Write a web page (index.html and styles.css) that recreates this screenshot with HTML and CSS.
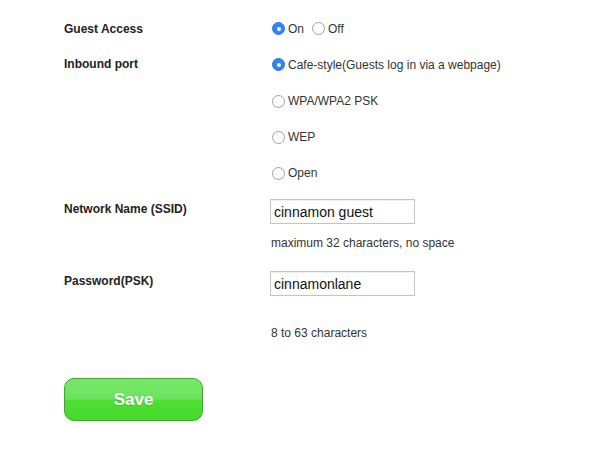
FILE: index.html
```html
<!DOCTYPE html>
<html>
<head>
<meta charset="utf-8">
<link rel="stylesheet" href="styles.css">
</head>
<body>
<form class="settings">
  <div class="row radio-row first">
    <div class="label">Guest Access</div>
    <div class="value inline">
      <label class="opt"><span class="radio checked"></span>On</label>
      <label class="opt"><span class="radio"></span>Off</label>
    </div>
  </div>
  <div class="row radio-row">
    <div class="label">Inbound port</div>
    <div class="value"><label class="opt"><span class="radio checked"></span>Cafe-style(Guests log in via a webpage)</label></div>
  </div>
  <div class="row radio-row sub-first">
    <div class="label"></div>
    <div class="value"><label class="opt"><span class="radio"></span>WPA/WPA2 PSK</label></div>
  </div>
  <div class="row radio-row">
    <div class="label"></div>
    <div class="value"><label class="opt"><span class="radio"></span>WEP</label></div>
  </div>
  <div class="row radio-row">
    <div class="label"></div>
    <div class="value"><label class="opt"><span class="radio"></span>Open</label></div>
  </div>
  <div class="row field-row ssid">
    <div class="label field-label">Network Name (SSID)</div>
    <div class="value">
      <input class="text" type="text" value="cinnamon guest">
      <div class="hint">maximum 32 characters, no space</div>
    </div>
  </div>
  <div class="row field-row psk">
    <div class="label field-label">Password(PSK)</div>
    <div class="value">
      <input class="text" type="text" value="cinnamonlane">
      <div class="hint hint-far">8 to 63 characters</div>
    </div>
  </div>
  <div class="actions">
    <button type="button" class="save">Save</button>
  </div>
</form>
</body>
</html>
```
FILE: styles.css
```css
html, body {
  margin: 0;
  padding: 0;
  background: #ffffff;
}
body {
  font-family: "Liberation Sans", Arial, sans-serif;
  color: #222;
  width: 604px;
  height: 464px;
  overflow: hidden;
}
.settings {
  padding: 11px 0 0 64px;
}
.row {
  display: grid;
  grid-template-columns: 206px 1fr;
}
.radio-row {
  height: 36px;
  align-items: center;
}
.radio-row.first {
  height: 35px;
}
.radio-row.sub-first {
  margin-top: 2px;
}
.label {
  font-size: 12px;
  font-weight: bold;
  color: #222;
  line-height: 16px;
}
.value {
  font-size: 12px;
  color: #333;
}
.inline {
  display: flex;
  gap: 6px;
}
.opt {
  display: inline-flex;
  align-items: center;
  line-height: 16px;
}
.radio {
  box-sizing: border-box;
  width: 13px;
  height: 13px;
  border-radius: 50%;
  border: 1px solid #a0a0a0;
  background: #fff;
  margin: 0 3px 0 2px;
  display: inline-flex;
  align-items: center;
  justify-content: center;
}
.radio.checked {
  background: #2f83f5;
  border-color: #2a7ae8;
}
.radio.checked::after {
  content: "";
  width: 4px;
  height: 4px;
  border-radius: 50%;
  background: #fff;
}
.field-row {
  align-items: start;
}
.ssid {
  margin-top: 7px;
}
.psk {
  margin-top: 21px;
}
.field-label {
  padding-top: 2px;
}
.text {
  box-sizing: border-box;
  width: 145px;
  height: 25px;
  border: 1px solid #c4c4c4;
  box-shadow: inset 0 1px 1px rgba(0,0,0,0.06);
  padding: 0 3px;
  font-family: "Liberation Sans", Arial, sans-serif;
  font-size: 14px;
  color: #111;
  display: block;
  outline: none;
}
.hint {
  font-size: 12px;
  line-height: 14px;
  color: #333;
  margin-top: 12px;
  padding-left: 1px;
}
.hint-far {
  margin-top: 30px;
}
.actions {
  padding-top: 38px;
}
.save {
  box-sizing: border-box;
  width: 139px;
  height: 43px;
  border: 1px solid #3fa52f;
  border-radius: 10px;
  background: linear-gradient(to bottom, #77e76a 0%, #6be35e 49%, #4fdf36 51%, #44da2b 100%);
  color: #fff;
  font-family: "Liberation Sans", Arial, sans-serif;
  font-weight: bold;
  font-size: 17px;
  text-shadow: 0 1px 1px rgba(0,0,0,0.15);
  padding: 0;
}
```
